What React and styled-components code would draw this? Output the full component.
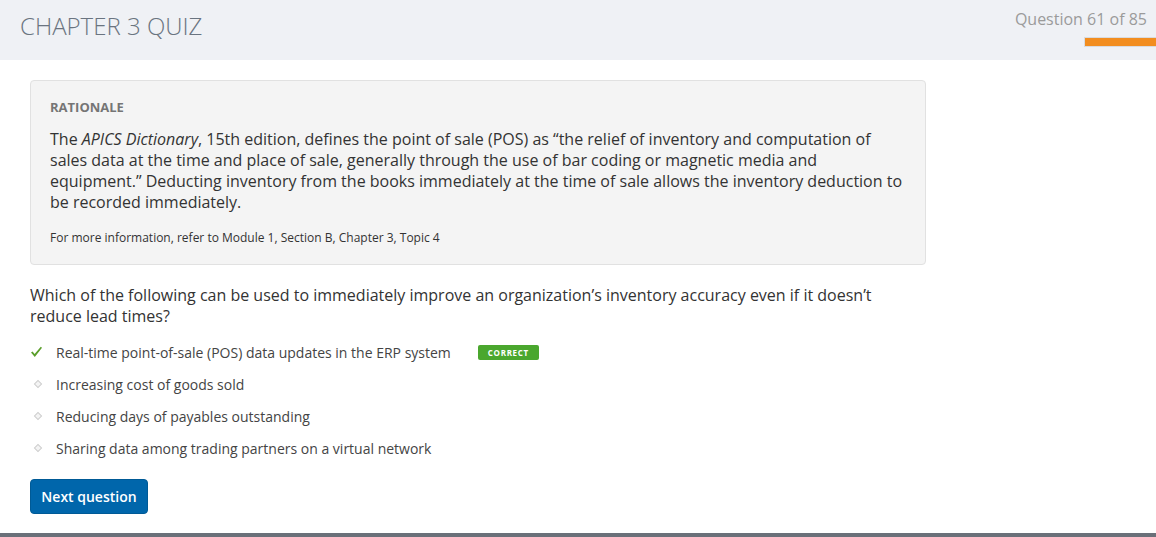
import React from 'react';
import styled, { createGlobalStyle } from 'styled-components';

const GlobalStyle = createGlobalStyle`
  html, body {
    margin: 0;
    padding: 0;
    background: #ffffff;
    font-family: "Open Sans", "Liberation Sans", sans-serif;
  }
`;

const Page = styled.div`
  width: 1156px;
  height: 537px;
  display: flex;
  flex-direction: column;
  overflow: hidden;
`;

// header
const Header = styled.div`
  height: 60px;
  background: #eff1f5;
  display: flex;
  justify-content: space-between;
  align-items: flex-start;
  flex-shrink: 0;
`;

const Title = styled.h1`
  margin: 11px 0 0 20px;
  font-size: 24px;
  font-weight: 300;
  color: #6a7480;
  line-height: 30px;
`;

const Progress = styled.div`
  display: flex;
  flex-direction: column;
  align-items: flex-end;
`;

const Counter = styled.div`
  margin: 8px 9px 0 0;
  font-size: 16px;
  color: #9b9b9b;
  line-height: 22px;
`;

const ProgressBar = styled.div`
  margin-top: 7px;
  width: 71px;
  height: 8px;
  background: #f28d1f;
  border: 1px solid #d9dbde;
  border-right: none;
`;
// header

const Main = styled.div`
  flex: 1;
  padding: 20px 30px 0;
  display: flex;
  flex-direction: column;
  align-items: flex-start;
`;

// rationale
const Rationale = styled.div`
  width: 896px;
  box-sizing: border-box;
  background: #f4f4f4;
  border: 1px solid #e1e1e1;
  border-radius: 4px;
  padding: 18px 19px 18px;
  color: #333;
`;

const Label = styled.div`
  font-size: 13px;
  font-weight: 700;
  color: #757575;
  line-height: 17px;
  margin-bottom: 13px;
`;

const Paragraph = styled.p`
  margin: 0;
  font-size: 16px;
  line-height: 21px;
  color: #333;
`;

const Note = styled.div`
  margin-top: 17px;
  font-size: 12px;
  line-height: 16px;
  color: #333;
`;
// rationale

const Question = styled.p`
  margin: 20px 0 0;
  width: 880px;
  font-size: 16px;
  line-height: 21px;
  color: #333;
`;

const Options = styled.ul`
  list-style: none;
  margin: 9px 0 0;
  padding: 0;
`;

const Option = styled.li`
  height: 32px;
  display: flex;
  align-items: center;
  font-size: 14px;
  color: #444;
`;

const Marker = styled.span`
  width: 26px;
  display: flex;
  align-items: center;
  justify-content: flex-start;
  padding-left: ${(p) => (p.$check ? '0' : '5px')};
  box-sizing: border-box;
`;

const Dot = styled.span`
  width: 4px;
  height: 4px;
  background: #f4f4f4;
  border: 1px solid #cfcfcf;
  transform: rotate(45deg);
`;

const Badge = styled.span`
  margin-left: 27px;
  height: 15px;
  padding: 0 10px;
  background: #4aa72e;
  border-radius: 2px;
  color: #fff;
  font-size: 8px;
  font-weight: 700;
  letter-spacing: 0.7px;
  display: inline-flex;
  align-items: center;
`;

const Button = styled.button`
  margin-top: 15px;
  height: 35px;
  width: 118px;
  border: 1px solid #005a96;
  border-radius: 4px;
  background: #0066ab;
  color: #fff;
  font-family: "Open Sans", "Liberation Sans", sans-serif;
  font-size: 14px;
  font-weight: 600;
  cursor: pointer;
`;

const Footer = styled.div`
  height: 4px;
  background: #6a7079;
  flex-shrink: 0;
`;

const options = [
  { text: 'Real-time point-of-sale (POS) data updates in the ERP system', correct: true },
  { text: 'Increasing cost of goods sold' },
  { text: 'Reducing days of payables outstanding' },
  { text: 'Sharing data among trading partners on a virtual network' },
];

const Check = () => (
  <svg width="13" height="12" viewBox="0 0 13 12">
    <path d="M1 6.6 L2.6 5.4 L4.6 8 L10.8 0.8 L12 1.8 L4.8 11 Z" fill="#5a9e2a" />
  </svg>
);

export default function App() {
  return (
    <>
      <GlobalStyle />
      <Page>
        <Header>
          <Title>CHAPTER 3 QUIZ</Title>
          <Progress>
            <Counter>Question 61 of 85</Counter>
            <ProgressBar />
          </Progress>
        </Header>
        <Main>
          <Rationale>
            <Label>RATIONALE</Label>
            <Paragraph>
              The <em>APICS Dictionary</em>, 15th edition, defines the point of sale (POS) as “the relief of inventory and computation of sales data at the time and place of sale, generally through the use of bar coding or magnetic media and equipment.” Deducting inventory from the books immediately at the time of sale allows the inventory deduction to be recorded immediately.
            </Paragraph>
            <Note>For more information, refer to Module 1, Section B, Chapter 3, Topic 4</Note>
          </Rationale>
          <Question>
            Which of the following can be used to immediately improve an organization’s inventory accuracy even if it doesn’t reduce lead times?
          </Question>
          <Options>
            {options.map((o) => (
              <Option key={o.text}>
                <Marker $check={o.correct}>{o.correct ? <Check /> : <Dot />}</Marker>
                {o.text}
                {o.correct && <Badge>CORRECT</Badge>}
              </Option>
            ))}
          </Options>
          <Button>Next question</Button>
        </Main>
        <Footer />
      </Page>
    </>
  );
}
